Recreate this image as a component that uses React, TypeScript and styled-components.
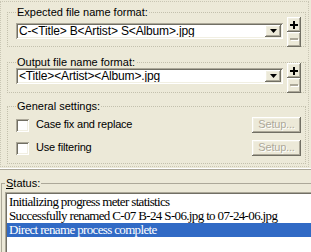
import React from "react";
import styled, { createGlobalStyle } from "styled-components";

const GlobalStyle = createGlobalStyle`
  html, body { margin: 0; padding: 0; background: #ece9d8; }
  body { font-family: "Liberation Sans", Arial, sans-serif; }
  * { box-sizing: border-box; }
`;

const raised = `
  box-shadow: inset -1px -1px 0 #716f64, inset 1px 1px 0 #ffffff,
    inset -2px -2px 0 #aca899, inset 2px 2px 0 #f1efe2;
`;

const sunken = `
  box-shadow: inset 1px 1px 0 #aca899, inset -1px -1px 0 #ffffff,
    inset 2px 2px 0 #716f64, inset -2px -2px 0 #f1efe2;
`;

const Window = styled.div`
  width: 311px;
  height: 252px;
  overflow: hidden;
  background: #ece9d8;
  display: flex;
  flex-direction: column;
`;

const Panel = styled.div`
  width: 309px;
  margin-top: 1px;
  border: 1px dotted #c9c6b4;
  padding: 0 2px 2px 6px;
  display: flex;
  flex-direction: column;
`;

const Group = styled.fieldset<{ $mt: number; $pt?: number; $pb?: number }>`
  margin: ${(p) => p.$mt}px 0 0 0;
  padding: ${(p) => p.$pt ?? 0}px 4px ${(p) => p.$pb ?? 0}px 8px;
  border: 1px dotted #c3c0ad;
  min-width: 0;
`;

const Legend = styled.legend`
  padding: 0 1px;
  margin: 0;
  font: 11px/10px "Liberation Sans", Arial, sans-serif;
  color: #000;
`;

const FormatRow = styled.div<{ $mt: number }>`
  display: flex;
  align-items: flex-start;
  gap: 4px;
  margin: ${(p) => p.$mt}px 0 -1px 0;
`;

const Combo = styled.div<{ $offset: number }>`
  flex: 1;
  height: 16px;
  margin-top: ${(p) => p.$offset}px;
  background: #fff;
  padding: 2px;
  display: flex;
  ${sunken}
`;

const ComboText = styled.div`
  flex: 1;
  padding-left: 1px;
  font: 12px/12px "Liberation Sans", Arial, sans-serif;
  letter-spacing: -0.15px;
  color: #000;
  white-space: nowrap;
  overflow: hidden;
`;

const DropButton = styled.div`
  width: 16px;
  background: #ece9d8;
  display: flex;
  align-items: center;
  justify-content: center;
  ${raised}
`;

const SpinColumn = styled.div`
  display: flex;
  flex-direction: column;
  width: 14px;
`;

const SpinButton = styled.div`
  height: 15px;
  background: #ece9d8;
  display: flex;
  align-items: center;
  justify-content: center;
  ${raised}
`;

const Options = styled.div`
  display: flex;
  flex-direction: column;
  gap: 7px;
`;

const OptionRow = styled.div`
  display: flex;
  align-items: center;
  height: 16px;
`;

const CheckBox = styled.span`
  width: 13px;
  height: 13px;
  flex-shrink: 0;
  background: #fff;
  ${sunken}
`;

const OptionLabel = styled.span`
  flex: 1;
  margin-left: 7px;
  margin-top: -2px;
  font: 11px "Liberation Sans", Arial, sans-serif;
  letter-spacing: -0.2px;
  color: #000;
`;

const SetupButton = styled.button`
  width: 49px;
  height: 16px;
  padding: 0 0 1px 0;
  border: none;
  background: #ece9d8;
  font: 11px/13px "Liberation Sans", Arial, sans-serif;
  letter-spacing: -0.2px;
  color: #aca899;
  text-shadow: 1px 1px 0 #fff;
  ${raised}
`;

const Splitter = styled.div`
  margin-top: 1px;
  height: 2px;
  border-top: 1px solid #ffffff;
  border-bottom: 1px solid #aca899;
`;

const StatusGroup = styled.fieldset`
  margin: 8px -40px 0 1px;
  padding: 4px 0 0 3px;
  border: 1px solid #aca899;
  min-width: 0;
`;

const StatusLegend = styled.legend`
  padding: 0 1px;
  margin: 0;
  font: 11px/10px "Liberation Sans", Arial, sans-serif;
  color: #000;
  u { text-decoration: underline; text-underline-offset: 1px; }
`;

const ListBox = styled.div`
  height: 90px;
  background: #fff;
  padding: 3px 0 0 2px;
  ${sunken}
`;

const ListItem = styled.div<{ $selected?: boolean }>`
  height: 14px;
  padding-left: 2px;
  font: 13px/14px "Liberation Serif", "Times New Roman", serif;
  letter-spacing: -0.65px;
  white-space: nowrap;
  color: ${(p) => (p.$selected ? "#fff" : "#000")};
  background: ${(p) => (p.$selected ? "#316ac5" : "transparent")};
`;

const Arrow = () => (
  <svg width="7" height="4" viewBox="0 0 7 4">
    <polygon points="0,0 7,0 3.5,4" fill="#000" />
  </svg>
);

const Plus = () => (
  <svg width="8" height="8" viewBox="0 0 8 8">
    <rect x="0" y="3" width="8" height="2" fill="#000" />
    <rect x="3" y="0" width="2" height="8" fill="#000" />
  </svg>
);

const Minus = () => (
  <svg width="9" height="3" viewBox="0 0 9 3">
    <rect x="1" y="1" width="8" height="2" fill="#fff" />
    <rect x="0" y="0" width="8" height="2" fill="#aca899" />
  </svg>
);

type FormatProps = { label: string; value: string; mt: number; rowTop: number; offset: number };

const FormatGroup = ({ label, value, mt, rowTop, offset }: FormatProps) => (
  <Group $mt={mt}>
    <Legend>{label}</Legend>
    <FormatRow $mt={rowTop}>
      <Combo $offset={offset}>
        <ComboText>{value}</ComboText>
        <DropButton>
          <Arrow />
        </DropButton>
      </Combo>
      <SpinColumn>
        <SpinButton>
          <Plus />
        </SpinButton>
        <SpinButton>
          <Minus />
        </SpinButton>
      </SpinColumn>
    </FormatRow>
  </Group>
);

const statusLines = [
  "Initializing progress meter statistics",
  "Successfully renamed C-07 B-24 S-06.jpg to 07-24-06.jpg",
  "Direct rename process complete",
];

export default function App() {
  return (
    <>
      <GlobalStyle />
      <Window>
        <Panel>
          <FormatGroup
            label="Expected file name format:"
            value="C-<Title> B<Artist> S<Album>.jpg"
            mt={5}
            rowTop={0}
            offset={6}
          />
          <FormatGroup
            label="Output file name format:"
            value="<Title><Artist><Album>.jpg"
            mt={10}
            rowTop={-4}
            offset={5}
          />
          <Group $mt={8} $pt={6} $pb={7}>
            <Legend>General settings:</Legend>
            <Options>
              <OptionRow>
                <CheckBox />
                <OptionLabel>Case fix and replace</OptionLabel>
                <SetupButton disabled>Setup...</SetupButton>
              </OptionRow>
              <OptionRow>
                <CheckBox />
                <OptionLabel>Use filtering</OptionLabel>
                <SetupButton disabled>Setup...</SetupButton>
              </OptionRow>
            </Options>
          </Group>
        </Panel>
        <Splitter />
        <StatusGroup>
          <StatusLegend>
            <u>S</u>tatus:
          </StatusLegend>
          <ListBox>
            {statusLines.map((line, i) => (
              <ListItem key={line} $selected={i === statusLines.length - 1}>
                {line}
              </ListItem>
            ))}
          </ListBox>
        </StatusGroup>
      </Window>
    </>
  );
}
